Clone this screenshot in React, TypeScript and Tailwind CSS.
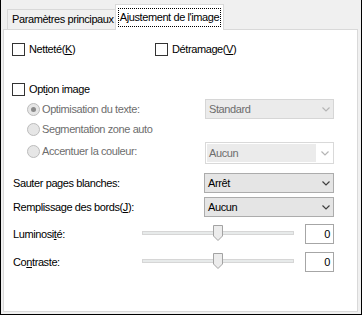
import type { ReactNode } from "react";

const font = "font-['Liberation_Sans',Arial,sans-serif]";

function Checkbox({ children }: { children: ReactNode }) {
  return (
    <label className="flex items-center gap-[4px]">
      <span className="w-[13px] h-[13px] border border-[#333333] bg-white" />
      <span className="text-black">{children}</span>
    </label>
  );
}

function Radio({ checked, children }: { checked?: boolean; children: ReactNode }) {
  return (
    <label className="flex items-center gap-[2px]">
      <span className="w-[13px] h-[13px] rounded-full border border-[#bcbcbc] bg-[#e6e6e6] flex items-center justify-center">
        {checked && <span className="w-[5px] h-[5px] rounded-full bg-[#8a8a8a]" />}
      </span>
      <span className="text-[#6d6d6d]">{children}</span>
    </label>
  );
}

function Chevron({ color }: { color: string }) {
  return (
    <svg width="8" height="5" viewBox="0 0 8 5" className="mr-[3px]">
      <path d="M0.5 0.5 L4 4 L7.5 0.5" fill="none" stroke={color} strokeWidth="1.2" />
    </svg>
  );
}

function Select({ value, variant }: { value: string; variant: "on" | "off" | "edit" }) {
  if (variant === "edit") {
    return (
      <div className="w-[129px] h-[22px] border border-[#d9d9d9] bg-white flex items-center p-[1px]">
        <div className="w-[109px] h-full bg-[#ebebeb] flex items-center pl-[2px] text-[#6d6d6d]">{value}</div>
        <div className="flex-1 flex justify-end">
          <Chevron color="#b5b5b5" />
        </div>
      </div>
    );
  }
  const on = variant === "on";
  return (
    <div
      className={
        on
          ? "w-[130px] h-[20px] border border-[#acacac] bg-[#e5e5e5] flex items-center justify-between pl-[3px] text-black"
          : "w-[129px] h-[20px] border border-[#d6d6d6] bg-[#ebebeb] flex items-center justify-between pl-[3px] text-[#6d6d6d]"
      }
    >
      <span>{value}</span>
      <Chevron color={on ? "#404040" : "#b5b5b5"} />
    </div>
  );
}

function Slider() {
  return (
    <div className="relative w-[152px] h-[20px]">
      <div className="absolute left-0 right-0 top-[7px] h-[4px] border border-[#d6d6d6] bg-[#e7eaea]" />
      <svg width="10" height="16" viewBox="0 0 10 16" className="absolute left-[71px] top-[1px]">
        <path d="M0.5 0.5 H9.5 V11 L5 15.5 L0.5 11 Z" fill="#ececec" stroke="#a3a3a3" />
      </svg>
    </div>
  );
}

function NumberBox() {
  return (
    <div className="w-[29px] h-[20px] border border-[#a6a6a6] bg-white flex items-center justify-end pr-[3px] text-black">
      0
    </div>
  );
}

export default function App() {
  return (
    <div className={`${font} text-[11px] tracking-[-0.4px] leading-none whitespace-nowrap w-[362px] h-[315px] bg-[#f0f0f0] border-x border-b border-black pt-[4px] pl-[2px]`}>
      {/* Tabs */}
      <div className="flex items-end h-[25px] pl-[4px]">
        <div className="w-[109px] h-[20px] border border-b-0 border-[#d9d9d9] bg-[#f0f0f0] flex items-center pl-[4px] text-black">
          Paramètres principaux
        </div>
        <div className="relative z-10 -ml-px -mb-px w-[109px] h-[26px] border border-b-0 border-[#d9d9d9] bg-white pt-[3px] pl-[2px]">
          <div className="w-[103px] h-[19px] border border-dotted border-black flex items-center justify-center text-black">
            Ajustement de l'image
          </div>
        </div>
      </div>

      {/* Panel */}
      <div className="w-[355px] h-[283px] border border-[#d9d9d9] bg-white pl-[8px] pt-[9px] flex flex-col">
        <div className="flex items-center h-[20px]">
          <div className="w-[143px]">
            <Checkbox>Netteté(<u>K</u>)</Checkbox>
          </div>
          <Checkbox>Détramage(<u>V</u>)</Checkbox>
        </div>

        <div className="flex items-center h-[20px] mt-[20px]">
          <Checkbox>Opt<u>i</u>on image</Checkbox>
        </div>

        <div className="flex items-center h-[20px] pl-[15px]">
          <div className="w-[178px]">
            <Radio checked>Optimisation du texte:</Radio>
          </div>
          <Select value="Standard" variant="off" />
        </div>

        <div className="flex items-center h-[20px] pl-[15px]">
          <Radio>Segmentation zone auto</Radio>
        </div>

        <div className="flex items-center h-[22px] mt-[3px] pl-[15px]">
          <div className="w-[178px] -mt-[4px]">
            <Radio>Accentuer la couleur:</Radio>
          </div>
          <Select value="Aucun" variant="edit" />
        </div>

        <div className="flex items-center h-[20px] mt-[9px]">
          <span className="w-[192px] pl-[1px] text-black">Sauter pages blanches:</span>
          <Select value="Arrêt" variant="on" />
        </div>

        <div className="flex items-center h-[20px] mt-[4px]">
          <span className="w-[192px] pl-[1px] text-black">Remplissage des bords(<u>J</u>):</span>
          <Select value="Aucun" variant="on" />
        </div>

        <div className="flex items-center h-[20px] mt-[7px]">
          <span className="w-[130px] pl-[1px] text-black">Luminosi<u>t</u>é:</span>
          <Slider />
          <div className="ml-[11px]">
            <NumberBox />
          </div>
        </div>

        <div className="flex items-center h-[20px] mt-[8px]">
          <span className="w-[130px] pl-[1px] text-black">Co<u>n</u>traste:</span>
          <Slider />
          <div className="ml-[11px]">
            <NumberBox />
          </div>
        </div>
      </div>
    </div>
  );
}
